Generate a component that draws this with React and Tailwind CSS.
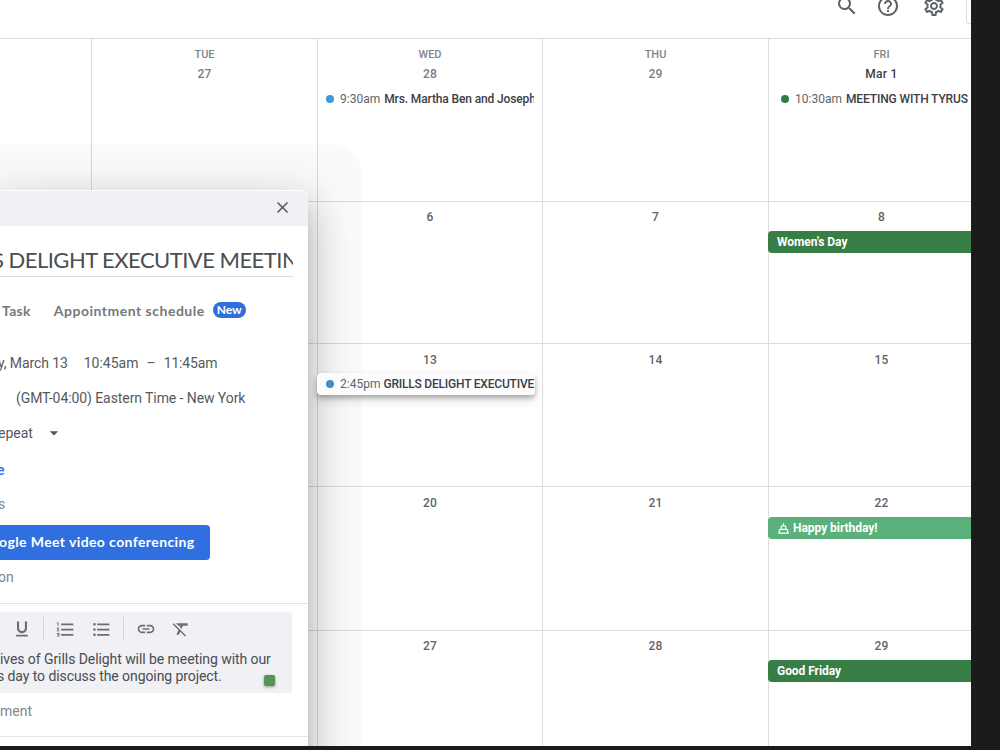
import React from 'react';
import {
    MdSearch,
    MdHelpOutline,
    MdOutlineSettings,
    MdClose,
    MdArrowDropDown,
    MdFormatUnderlined,
    MdFormatListNumbered,
    MdFormatListBulleted,
    MdLink,
    MdFormatClear,
} from 'react-icons/md';

const weeks = [
    {
        height: "h-[163px] pt-2",
        days: [
            { label: "", num: "" },
            { label: "TUE", num: "27" },
            { label: "WED", num: "28", event: { type: "timed", dot: "bg-[#3f97dc]", time: "9:30am", title: "Mrs. Martha Ben and Joseph" } },
            { label: "THU", num: "29" },
            { label: "FRI", num: "Mar 1", event: { type: "timed", indent: true, dot: "bg-[#2f7d43]", time: "10:30am", title: "MEETING WITH TYRUS" } },
        ]
    },
    {
        height: "h-[142px] pt-[7px]",
        days: [{ num: "" }, { num: "" }, { num: "6" }, { num: "7" },
            { num: "8", event: { type: "bar", color: "bg-[#377d46]", title: "Women's Day" } }]
    },
    {
        height: "h-[143px] pt-[8px]",
        days: [{ num: "" }, { num: "" },
            { num: "13", event: { type: "raised", dot: "bg-[#3b8fd3]", time: "2:45pm", title: "GRILLS DELIGHT EXECUTIVE" } },
            { num: "14" }, { num: "15" }]
    },
    {
        height: "h-[144px] pt-[8px]",
        days: [{ num: "" }, { num: "" }, { num: "20" }, { num: "21" },
            { num: "22", event: { type: "bar", color: "bg-[#5cb07c]", title: "Happy birthday!", cake: true } }]
    },
    {
        height: "flex-1 pt-[7px]",
        days: [{ num: "" }, { num: "" }, { num: "27" }, { num: "28" },
            { num: "29", event: { type: "bar", color: "bg-[#377d46]", title: "Good Friday" } }]
    },
]

function CakeIcon() {
    return (
        <svg viewBox="0 0 12 12" className="w-[11px] h-[11px] ml-px mr-1" fill="none" stroke="white" strokeWidth="1.3">
            <path d="M6 0.4v2.4M3.4 6.8V4.6c0-.9.6-1.5 1.4-1.5h2.4c.8 0 1.4.6 1.4 1.5v2.2M1.4 10.9V8.6c0-.9.6-1.6 1.4-1.6h6.4c.8 0 1.4.7 1.4 1.6v2.3M0.2 11h11.6" />
        </svg>
    )
}

function Event({ event }) {
    if(event.type === "bar") {
        return (
            <div className={"h-[22px] mt-[6px] -ml-px pl-[9px] w-[226px] rounded-[4px] flex items-center text-white text-[12px] font-bold tracking-[-0.05px] " + event.color}>
                {event.cake && <CakeIcon />}
                {event.title}
            </div>
        )
    }
    return (
        <div
        className={"h-[22px] flex items-center text-[12px] whitespace-nowrap rounded-[4px] text-[#3c4043]"
            + ((event.type === "raised") ? " mt-[5px] -ml-px pl-[9px] w-[218px] overflow-hidden relative z-20 bg-[#fcfcfc] shadow-[0_3px_5px_rgba(0,0,0,0.28),0_6px_12px_rgba(0,0,0,0.1)]"
                : (event.indent) ? " mt-[6px] w-[225px] pl-[12px]" : " mt-[6px] w-[216px] pl-[8px] overflow-hidden")}
        >
            <span className={"w-2 h-2 rounded-full mr-[6px] shrink-0 " + event.dot} />
            <span className="mr-1 text-[#5f6368]">{event.time}</span>
            <span className={"font-medium " + ((event.type === "raised") ? "-ml-px tracking-[-0.2px]" : "tracking-[-0.13px]")}>{event.title}</span>
        </div>
    )
}

function Day({ day, first }) {
    return (
        <div className={"-mt-2 pt-2 flex flex-col" + (first ? "" : " border-l border-[#dcdcdc]")}>
            {day.label !== undefined && (
                <p className="h-4 leading-4 mb-[3px] text-center text-[11px] font-medium text-[#80858a]">{day.label}</p>
            )}
            <p
            className={"h-4 leading-4 text-center text-[12px] font-medium tracking-[0.3px] "
                + ((day.num === "Mar 1") ? "text-[#3c4043]" : (day.label !== undefined) ? "text-[#7a7e83]" : "text-[#5f6368]")}
            >
                {day.num}
            </p>
            {day.event && <Event event={day.event} />}
        </div>
    )
}

function EventDialog() {
    return (
        <div className="absolute left-0 top-[190px] w-[308px] h-[580px] z-10 flex flex-col bg-white rounded-tr-[8px] text-[14px] text-[#55595d] whitespace-nowrap shadow-[0_24px_38px_3px_rgba(0,0,0,0.14),0_9px_46px_8px_rgba(0,0,0,0.12),0_11px_15px_-7px_rgba(0,0,0,0.2),0_8px_2px_54px_rgba(0,0,0,0.018)]">
            <div className="h-[36px] shrink-0 flex items-center justify-end pr-4 bg-[#f0f0f5] rounded-tr-[8px] border-t border-white">
                <MdClose size={19} className="-mt-[2px] text-[#55595d]" />
            </div>
            <div className="mt-[16px] mr-[15px] h-[35px] shrink-0 border-b border-[#dcdcdf] overflow-hidden font-['Lato',sans-serif] text-[22px] leading-[36px] text-[#4a4d51]">
                <p className="-ml-[8px] tracking-[-0.52px]">S DELIGHT EXECUTIVE MEETIN</p>
            </div>
            <div className="mt-[21px] h-6 shrink-0 flex items-center font-['Lato',sans-serif] text-[14px] font-bold text-[#74787d]">
                <span className="ml-[2px] tracking-[0.3px]">Task</span>
                <span className="ml-[23px] tracking-[0.5px]">Appointment schedule</span>
                <span className="ml-2 h-4 w-[33px] rounded-full bg-[#2f6fdc] text-white text-[12px] leading-4 text-center">New</span>
            </div>
            <div className="mt-[29px] h-6 shrink-0 flex items-center">
                <span className="-ml-[2px] tracking-[-0.1px]">y, March 13</span>
                <span className="ml-[16px]">10:45am</span>
                <span className="ml-[8px]">–</span>
                <span className="ml-[8px] tracking-[-0.15px]">11:45am</span>
            </div>
            <div className="mt-[11px] h-6 shrink-0 flex items-center">
                <span className="ml-4 tracking-[-0.08px]">(GMT-04:00) Eastern Time - New York</span>
            </div>
            <div className="mt-[11px] h-6 shrink-0 flex items-center">
                <span className="-ml-[2px]">epeat</span>
                <MdArrowDropDown size={20} className="ml-[11px]" />
            </div>
            <div className="mt-[13px] h-6 shrink-0 flex items-center font-medium text-[#2f6fdc]">
                <span className="-ml-[3px]">e</span>
            </div>
            <div className="mt-[10px] h-6 shrink-0 flex items-center text-[#80868b]">
                <span className="-ml-[2px]">s</span>
            </div>
            <div className="mt-[9px] h-[35px] w-[210px] shrink-0 flex items-center bg-[#2f6fe0] rounded-r-[4px] font-['Lato',sans-serif] font-bold text-white">
                <span className="-ml-[1px] -mt-[2px] tracking-[0.4px]">ogle Meet video conferencing</span>
            </div>
            <div className="mt-[5px] h-6 shrink-0 flex items-center text-[#80868b]">
                <span className="-ml-[2px]">on</span>
            </div>
            <div className="mt-[14px] pt-[8px] border-t border-[#e4e4e6] shrink-0">
                <div className="w-[292px] h-[81px] bg-[#f0f0f5] rounded-r-[3px]">
                    <div className="h-[34px] flex items-center text-[#6a6e73]">
                        <MdFormatUnderlined size={20} className="ml-[12px]" />
                        <span className="ml-[11px] w-px h-6 bg-[#d5d5da]" />
                        <MdFormatListNumbered size={21} className="ml-[11px]" />
                        <MdFormatListBulleted size={21} className="ml-[15px]" />
                        <span className="ml-[11px] w-px h-6 bg-[#d5d5da]" />
                        <MdLink size={20} className="ml-[12px]" />
                        <MdFormatClear size={20} className="ml-[15px]" />
                    </div>
                    <div className="mt-[5px] flex text-[#4a4d51] leading-[17px]">
                        <div className="w-[264px]">
                            <p className="tracking-[-0.07px]">ives of Grills Delight will be meeting with our</p>
                            <p className="-ml-[3px] tracking-[-0.08px]">s day to discuss the ongoing project.</p>
                        </div>
                        <span className="mt-[24px] w-[11px] h-[11px] shrink-0 rounded-[2px] bg-[#559457] shadow-[0_1px_3px_rgba(0,0,0,0.4)]" />
                    </div>
                </div>
            </div>
            <div className="mt-[6px] h-6 shrink-0 flex items-center text-[#80868b]">
                <span>ment</span>
            </div>
            <div className="mt-[13px] border-t border-[#e4e4e6]" />
        </div>
    )
}

export default function App() {
    return (
        <div className="w-[1000px] h-[750px] bg-[#1b1b1b] overflow-hidden font-['Roboto',sans-serif]">
            <div className="relative w-[971px] h-[746px] bg-white overflow-hidden flex flex-col">
                <header className="h-[39px] shrink-0 border-b border-[#dcdcdc] flex items-start justify-end text-[#5f6368]">
                    <MdSearch size={24} className="-mt-[6px] mr-[17px]" />
                    <MdHelpOutline size={24} className="-mt-[6px] mr-[22px]" />
                    <MdOutlineSettings size={24} className="-mt-[6px] mr-[20px]" />
                    <div className="w-[5px] h-[24px] border-l border-b border-[#dadce0] rounded-bl-[4px]" />
                </header>
                <main className="flex-1 flex flex-col">
                    {weeks.map((w, i) => (
                        <div
                        className={"shrink-0 grid grid-cols-[91px_226px_225px_226px_226px] " + w.height + ((i < weeks.length - 1) ? " border-b border-[#dcdcdc]" : "")}
                        key={i}
                        >
                            {w.days.map((d, j) => <Day day={d} first={j === 0} key={j} />)}
                        </div>
                    ))}
                </main>
                <EventDialog />
            </div>
        </div>
    )
};
